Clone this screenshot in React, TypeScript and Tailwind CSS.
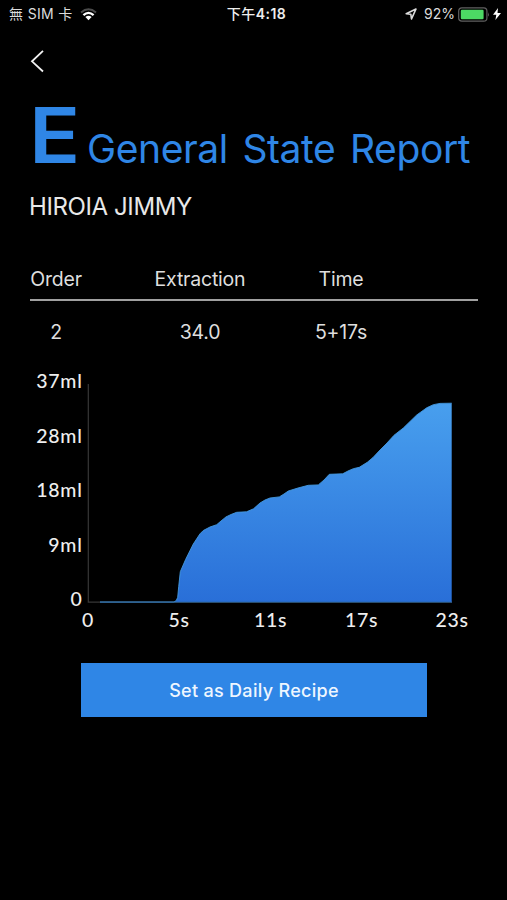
const CURVE: [number, number][] = [
  [100, 602], [174, 602], [176.3, 600.5], [177.7, 597.3], [178.7, 586.7], [180.3, 571.7], [185.7, 559.3],
  [193.3, 544], [200, 533.8], [203.3, 530.5], [210, 527], [216.7, 524.7], [221, 521], [226, 516.9],
  [231, 514.5], [236.7, 512.3], [246.5, 511.8], [253.5, 508.8], [260, 503], [265, 500], [270, 498],
  [279.3, 496.9], [284, 494], [288.3, 491], [298, 488], [308.3, 485.3], [318.3, 484.9], [324, 480],
  [329.3, 474.3], [342.7, 473.8], [348, 471], [353.3, 468.7], [359.3, 467.3], [367.3, 462.3],
  [373, 457.5], [380, 450], [387, 443], [394, 435.3], [403.3, 428], [410, 421.5], [416.7, 415],
  [422, 411.2], [426.7, 407.8], [433.3, 404.7], [440, 403.4], [451.7, 403.2],
];

const Y_LABELS = [
  { text: '37ml', y: 388 },
  { text: '28ml', y: 442.5 },
  { text: '18ml', y: 497 },
  { text: '9ml', y: 551.5 },
  { text: '0', y: 606 },
];

const X_LABELS = [
  { text: '0', x: 88 },
  { text: '5s', x: 179 },
  { text: '11s', x: 270.5 },
  { text: '17s', x: 361.5 },
  { text: '23s', x: 452 },
];

function StatusBar() {
  return (
    <div className="grid h-7 grid-cols-3 items-center text-[14px] leading-[26px] text-[#dcdcdc]">
      <div className="flex h-[27px] items-center pl-[9px]">
        <span className="whitespace-pre tracking-[0.35px]">無 SIM 卡</span>
        <svg className="ml-[7px] h-[13px] w-[17px]" viewBox="0 0 17 13" fill="none">
          <path d="M1 4.4Q8.5-1.8 16 4.4" stroke="#4b4b4b" strokeWidth="2" />
          <path d="M3.4 7.1Q8.5 2.6 13.6 7.1" stroke="#fff" strokeWidth="2.3" />
          <path d="M5.4 9Q8.5 6.3 11.6 9L8.5 12.2Z" fill="#fff" />
        </svg>
      </div>
      <div className="h-[27px] text-center font-medium tracking-[0.5px] text-[#eee]">
        <span className="relative left-[3px]">
          下午<span className="font-semibold">4:18</span>
        </span>
      </div>
      <div className="flex h-[27px] items-center justify-end pr-[6px]">
        <svg className="mr-[7px] h-3 w-3" viewBox="0 0 12 12" fill="none">
          <path d="M1.2 5.8 11 1 6.5 10.9 5.8 6.2Z" stroke="#dcdcdc" strokeWidth="1.6" strokeLinejoin="round" />
        </svg>
        <span className="mr-[3px]">92%</span>
        <svg className="h-[15px] w-[32px]" viewBox="0 0 32 15" fill="none">
          <rect x="0.7" y="0.9" width="28.2" height="13.2" rx="3.2" stroke="#606060" strokeWidth="1.2" />
          <rect x="2.8" y="2.8" width="22.8" height="9.4" rx="1.2" fill="#4cd964" />
          <path d="M30 5.2Q31.8 7.5 30 9.8Z" fill="#606060" />
        </svg>
        <svg className="ml-[3px] h-3 w-2" viewBox="0 0 8 12">
          <path d="M5 0 0 6.8H3.3L2.4 12 8 4.9H4.5Z" fill="#fff" />
        </svg>
      </div>
    </div>
  );
}

function ExtractionChart() {
  const line = CURVE.map(([x, y]) => `${x},${y}`).join(' ');

  return (
    <svg className="block h-[280px] w-[507px]" viewBox="0 360 507 280">
      <defs>
        <linearGradient id="area" x1="0" y1="403" x2="0" y2="602" gradientUnits="userSpaceOnUse">
          <stop offset="0" stopColor="#489fee" />
          <stop offset="1" stopColor="#296fd8" />
        </linearGradient>
      </defs>
      <path d="M88.3 384V602.2H452" stroke="#373737" strokeWidth="1.2" fill="none" />
      <polygon points={`${line} 451.7,602`} fill="url(#area)" />
      <polyline points={line} fill="none" stroke="#4398e0" strokeWidth="0.9" />
      <path d="M100 602.2H452" stroke="#2b679d" strokeWidth="0.9" />
      <g className="font-['Lato'] text-[19.5px] font-medium" fill="#eee" letterSpacing="0.7">
        {Y_LABELS.map((l) => (
          <text key={l.text} x="82.5" y={l.y} textAnchor="end">
            {l.text}
          </text>
        ))}
        {X_LABELS.map((l) => (
          <text key={l.text} x={l.x} y="627" textAnchor="middle">
            {l.text}
          </text>
        ))}
      </g>
    </svg>
  );
}

export default function App() {
  return (
    <div className="h-[900px] w-[507px] overflow-hidden bg-black font-['Inter','Noto_Sans_CJK_TC',sans-serif]">
      <StatusBar />

      <div className="flex h-[59px] pt-[21px] pl-[30px]">
        <svg className="h-6 w-4" viewBox="0 0 16 24" fill="none">
          <path d="M13 1.8 2 12.3 13 22.5" stroke="#f2f2f2" strokeWidth="1.8" />
        </svg>
      </div>

      <h1 className="flex h-[88px] items-baseline pl-[29px] whitespace-nowrap text-[#2f86e6]">
        <span className="w-[58px] origin-left scale-x-110 text-[77px] leading-[96px] font-semibold">E</span>
        <span className="text-[39px] font-normal tracking-[-0.4px] [word-spacing:4px]">General State Report</span>
      </h1>

      <p className="pt-[16px] pl-[29px] text-[24px] leading-8 font-normal tracking-[-0.4px] text-[#e8e8e8]">
        HIROIA JIMMY
      </p>

      <div className="mt-[37px] ml-[30px] w-[448px] text-[19.5px] font-normal tracking-[-0.2px] text-[#dedede]">
        <div className="grid h-[41px] grid-cols-[52px_236px_46px] justify-items-center border-b-2 border-[#a0a0a0] leading-[38px] whitespace-nowrap">
          <span>Order</span>
          <span>Extraction</span>
          <span>Time</span>
        </div>
        <div className="grid h-[59px] grid-cols-[52px_236px_46px] justify-items-center leading-[62px] whitespace-nowrap">
          <span>2</span>
          <span>34.0</span>
          <span>5+17s</span>
        </div>
      </div>

      <ExtractionChart />

      <button className="mt-[23px] ml-[81px] block h-[54px] w-[346px] bg-[#2f86e6] text-[18px] font-medium tracking-[0.3px] text-[#eef6ff]">
        Set as Daily Recipe
      </button>
    </div>
  );
}
